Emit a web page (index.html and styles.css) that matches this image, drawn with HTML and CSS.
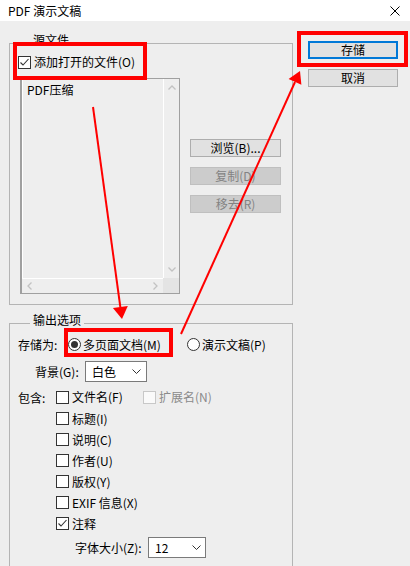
FILE: index.html
```html
<!DOCTYPE html>
<html lang="zh-CN">
  <head>
    <title>PDF 演示文稿</title>
    <meta charset="UTF-8" />
    <meta name="viewport" content="width=device-width, initial-scale=1.0" />
    <link rel="stylesheet" href="styles.css">
  </head>
  <body>
    <div class="window">
      <div class="titlebar">
        <span class="title">PDF 演示文稿</span>
        <svg class="close" width="10" height="10" viewBox="0 0 10 10">
          <path d="M0.5 0.5 L9.5 9.5 M9.5 0.5 L0.5 9.5" stroke="#000" stroke-width="1" fill="none" />
        </svg>
      </div>

      <div class="content">
        <div class="left">
          <div class="group group-src">
            <div class="legend">源文件</div>
            <label class="check src-check">
              <span class="box">
                <svg width="11" height="11" viewBox="0 0 11 11"><polyline points="1.5,5.5 4,8 9.5,2" fill="none" stroke="#333" stroke-width="1.1" /></svg>
              </span>添加打开的文件(O)
            </label>
            <div class="src-body">
              <div class="listbox">
                <div class="list-main">
                  <div class="list-items">
                    <div class="item">PDF压缩</div>
                  </div>
                  <div class="vscroll">
                    <svg width="8" height="5" viewBox="0 0 8 5"><polyline points="0.5,4.5 4,1 7.5,4.5" fill="none" stroke="#c2c2c2" stroke-width="1.3" /></svg>
                    <svg width="8" height="5" viewBox="0 0 8 5"><polyline points="0.5,0.5 4,4 7.5,0.5" fill="none" stroke="#c2c2c2" stroke-width="1.3" /></svg>
                  </div>
                </div>
                <div class="list-bottom">
                  <div class="hscroll">
                    <svg width="5" height="8" viewBox="0 0 5 8"><polyline points="4.5,0.5 1,4 4.5,7.5" fill="none" stroke="#c2c2c2" stroke-width="1.3" /></svg>
                    <svg width="5" height="8" viewBox="0 0 5 8"><polyline points="0.5,0.5 4,4 0.5,7.5" fill="none" stroke="#c2c2c2" stroke-width="1.3" /></svg>
                  </div>
                  <div class="corner"></div>
                </div>
              </div>
              <div class="side-buttons">
                <button class="btn btn-side">浏览(B)...</button>
                <button class="btn btn-side" disabled>复制(D)</button>
                <button class="btn btn-side" disabled>移去(R)</button>
              </div>
            </div>
          </div>

          <div class="group group-out">
            <div class="legend">输出选项</div>
            <div class="save-row">
              <span class="save-label">存储为:</span>
              <label class="radio-opt radio-first"><span class="radio on"></span>多页面文档(M)</label>
              <label class="radio-opt"><span class="radio"></span>演示文稿(P)</label>
            </div>
            <div class="bg-row">
              <span class="bg-label">背景(G):</span>
              <div class="select bg-select">
                <span>白色</span>
                <svg width="9" height="5" viewBox="0 0 9 5"><polyline points="0.5,0.5 4.5,4.5 8.5,0.5" fill="none" stroke="#333" stroke-width="1" /></svg>
              </div>
            </div>
            <div class="include-row">
              <span class="include-label">包含:</span>
              <label class="check name-check"><span class="box"></span>文件名(F)</label>
              <label class="check disabled"><span class="box"></span>扩展名(N)</label>
            </div>
            <div class="check-list">
              <label class="check"><span class="box"></span>标题(I)</label>
              <label class="check"><span class="box"></span>说明(C)</label>
              <label class="check"><span class="box"></span>作者(U)</label>
              <label class="check"><span class="box"></span>版权(Y)</label>
              <label class="check"><span class="box"></span>EXIF 信息(X)</label>
              <label class="check">
                <span class="box">
                  <svg width="11" height="11" viewBox="0 0 11 11"><polyline points="1.5,5.5 4,8 9.5,2" fill="none" stroke="#333" stroke-width="1.1" /></svg>
                </span>注释
              </label>
            </div>
            <div class="font-row">
              <span class="font-label">字体大小(Z):</span>
              <div class="select font-select">
                <span>12</span>
                <svg width="9" height="5" viewBox="0 0 9 5"><polyline points="0.5,0.5 4.5,4.5 8.5,0.5" fill="none" stroke="#333" stroke-width="1" /></svg>
              </div>
            </div>
          </div>
        </div>

        <div class="right">
          <button class="btn btn-default">存储</button>
          <button class="btn">取消</button>
        </div>
      </div>

      <!-- red annotations drawn over the dialog -->
      <svg class="annotations" width="410" height="566" viewBox="0 0 410 566">
        <g fill="none" stroke="#ff0000" stroke-width="4">
          <rect x="15" y="44" width="130" height="34" />
          <rect x="299" y="33" width="107" height="32" />
          <rect x="66" y="330" width="105" height="25" />
        </g>
        <g stroke="#ff0000" stroke-width="2">
          <line x1="93" y1="107" x2="120.4" y2="307.5" />
          <line x1="181" y1="334" x2="295" y2="82" />
        </g>
        <g fill="#ff0000">
          <polygon points="122,319 127.8,306.1 112.9,308.1" />
          <polygon points="300,71 301.4,84.8 288.6,79" />
        </g>
      </svg>
    </div>
  </body>
</html>
```

FILE: styles.css
```css
body {
  margin: 0;
  font-family: "Noto Sans CJK SC", "Noto Sans", sans-serif;
  font-size: 12px;
  color: #000;
}
.window {
  position: relative;
  width: 410px;
  height: 566px;
  overflow: hidden;
  background-color: #eeeeee;
}
.titlebar {
  display: flex;
  align-items: center;
  height: 21px;
  padding: 0 10px 0 8px;
  background-color: #fff;
}
.title {
  line-height: 16px;
}
.close {
  margin-left: auto;
}
.content {
  display: flex;
  align-items: flex-start;
  padding: 20px 0 0 9px;
}
.left {
  width: 284px;
  margin-top: 2px;
}
.group {
  box-sizing: border-box;
  border: 1px solid #b4b4b4;
}
.group-src {
  height: 262px;
}
.group-out {
  height: 300px;
  margin-top: 18px;
}
.legend {
  width: max-content;
  height: 14px;
  line-height: 14px;
  margin: -11px 0 0 20px;
  padding: 0 3px;
  background-color: #eeeeee;
}

/* checkboxes and radios */
.check {
  display: flex;
  align-items: center;
  gap: 3px;
  height: 21px;
  line-height: 16px;
}
.box {
  box-sizing: border-box;
  display: flex;
  align-items: center;
  justify-content: center;
  width: 13px;
  height: 13px;
  border: 1px solid #333;
  background-color: #fff;
}
.check.disabled {
  color: #8a8a8a;
}
.check.disabled .box {
  border-color: #c8c8c8;
  background-color: #fafafa;
}
.radio-opt {
  display: flex;
  align-items: center;
  gap: 2px;
}
.radio-first {
  width: 119px;
}
.radio {
  box-sizing: border-box;
  display: flex;
  align-items: center;
  justify-content: center;
  width: 13px;
  height: 13px;
  border: 1px solid #333;
  border-radius: 50%;
  background-color: #fff;
}
.radio.on::after {
  content: "";
  width: 7px;
  height: 7px;
  border-radius: 50%;
  background-color: #333;
}

/* source group */
.src-check {
  height: 16px;
  margin: 7px 0 0 8px;
}
.src-body {
  display: flex;
  align-items: flex-start;
  margin: 8px 0 0 10px;
}
.listbox {
  box-sizing: border-box;
  display: flex;
  flex-direction: column;
  width: 160px;
  height: 216px;
  border: 1px solid #a0a0a0;
  border-left-width: 2px;
}
.list-main {
  display: flex;
  flex: 1;
}
.list-items {
  flex: 1;
  padding: 3px 0 0 5px;
  box-shadow: inset 1px 0 0 #fff;
}
.item {
  line-height: 16px;
}
.vscroll {
  display: flex;
  flex-direction: column;
  justify-content: space-between;
  align-items: center;
  width: 16px;
  padding: 6px 0;
  border-left: 1px solid #fff;
  box-sizing: border-box;
}
.list-bottom {
  display: flex;
  height: 15px;
}
.hscroll {
  display: flex;
  justify-content: space-between;
  align-items: center;
  flex: 1;
  padding: 0 5px 0 5px;
  border-top: 1px solid #fff;
}
.corner {
  width: 16px;
  background-color: #e4e4e4;
}
.side-buttons {
  display: flex;
  flex-direction: column;
  gap: 10px;
  margin: 61px 0 0 10px;
}

/* buttons */
.btn {
  box-sizing: border-box;
  width: 90px;
  height: 18px;
  padding: 0;
  border: 1px solid #adadad;
  background-color: #e1e1e1;
  font-family: inherit;
  font-size: 12px;
  line-height: 14px;
  color: #000;
}
.btn-side {
  width: 91px;
}
.btn:disabled {
  border-color: #bfbfbf;
  background-color: #cccccc;
  color: #838383;
}
.btn-default {
  border: 2px solid #0078d7;
}
.right {
  display: flex;
  flex-direction: column;
  gap: 10px;
  margin-left: 15px;
}

/* output group */
.save-row {
  display: flex;
  align-items: center;
  height: 16px;
  margin-top: 9px;
  padding-left: 8px;
}
.save-label {
  width: 50px;
}
.bg-row {
  display: flex;
  align-items: center;
  height: 21px;
  margin-top: 9px;
  padding-left: 25px;
}
.bg-label {
  width: 50px;
}
.select {
  box-sizing: border-box;
  display: flex;
  align-items: center;
  justify-content: space-between;
  height: 21px;
  padding: 0 5px 0 6px;
  border: 1px solid #7a7a7a;
  background-color: #fff;
}
.bg-select {
  width: 62px;
}
.font-select {
  width: 58px;
  padding-right: 4px;
}
.include-row {
  display: flex;
  align-items: center;
  height: 16px;
  margin-top: 7px;
  padding-left: 8px;
}
.include-label {
  width: 38px;
}
.name-check {
  width: 87px;
}
.check-list {
  display: flex;
  flex-direction: column;
  margin-top: 3px;
  padding-left: 46px;
}
.font-row {
  display: flex;
  align-items: center;
  margin-top: 3px;
  padding-left: 65px;
}
.font-label {
  width: 73px;
}
.annotations {
  position: absolute;
  top: 0;
  left: 0;
  pointer-events: none;
}
```
